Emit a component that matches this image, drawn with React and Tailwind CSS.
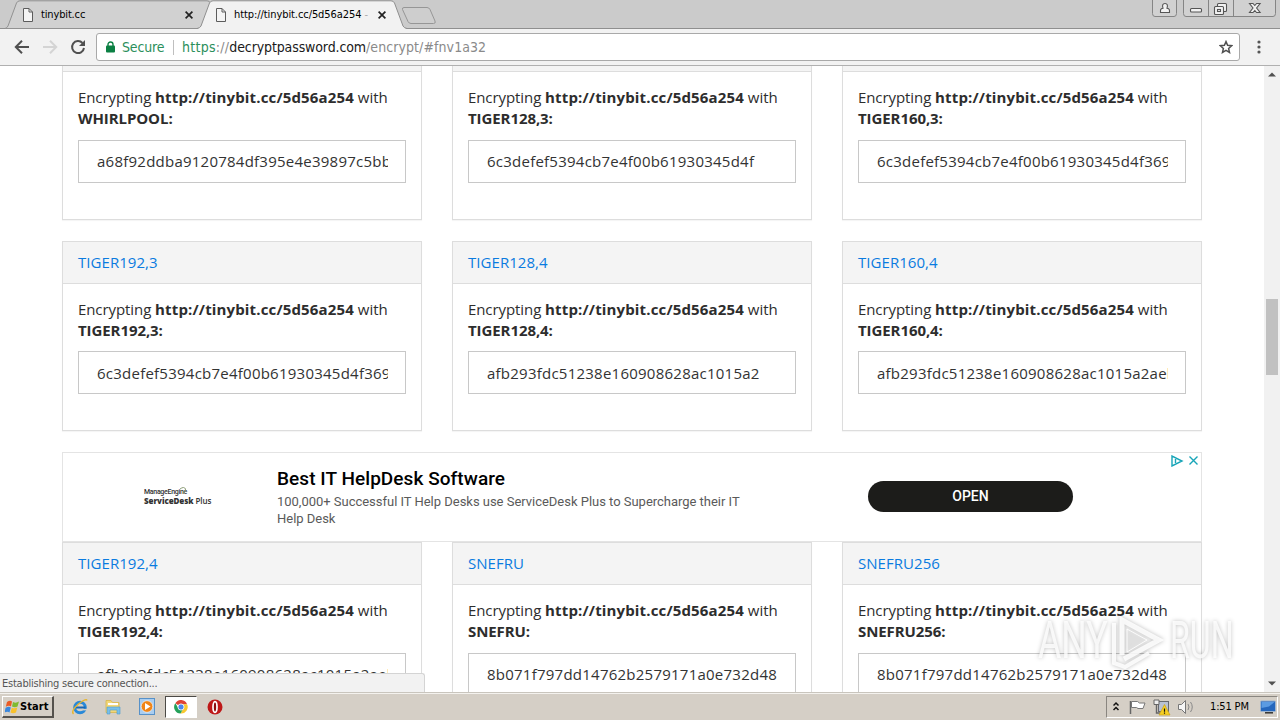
import React from "react";

const rows = [
  {
    id: "r1",
    row: "h-[191px]",
    gap: "mt-[11px] pb-[2px]",
    head: "",
    clipped: true,
    cards: [
      ["WHIRLPOOL", "a68f92ddba9120784df395e4e39897c5bb"],
      ["TIGER128,3", "6c3defef5394cb7e4f00b61930345d4f"],
      ["TIGER160,3", "6c3defef5394cb7e4f00b61930345d4f369"],
    ],
  },
  {
    id: "r2",
    row: "mt-[21px] h-[190px]",
    gap: "mt-[10px]",
    head: "",
    cards: [
      ["TIGER192,3", "6c3defef5394cb7e4f00b61930345d4f369"],
      ["TIGER128,4", "afb293fdc51238e160908628ac1015a2"],
      ["TIGER160,4", "afb293fdc51238e160908628ac1015a2aeb"],
    ],
  },
  {
    id: "r3",
    row: "h-[190px]",
    gap: "mt-[11px] pb-[2px]",
    head: "",
    cards: [
      ["TIGER192,4", "afb293fdc51238e160908628ac1015a2aeb"],
      ["SNEFRU", "8b071f797dd14762b2579171a0e732d48"],
      ["SNEFRU256", "8b071f797dd14762b2579171a0e732d48"],
    ],
  },
];

function Card({ name, hash, gap, clipped }) {
  return (
    <div className="w-[360px] shrink-0 border border-[#dddddd] bg-white shadow-[0_1px_1px_rgba(0,0,0,0.04)]">
      <div className="flex h-[42px] items-center border-b border-[#dddddd] bg-[#f4f4f4] px-[15px] text-[15px] tracking-[0.05px] text-[#0a7be0]">
        {clipped ? null : name}
      </div>
      <div className="px-[15px] pt-[15px]">
        <p className="whitespace-nowrap text-[15px] leading-[21px] text-[#2d2d2d]">
          <span className="tracking-[-0.08px]">Encrypting </span>
          <b className="font-bold tracking-[0.15px]">http://tinybit.cc/5d56a254</b> with
          <br />
          <b className="font-bold tracking-[-0.08px]">{name}:</b>
        </p>
        <div className={`${gap} flex h-[43px] items-center border border-[#c8c8c8] pl-[18px] pr-[17px]`}>
          <span className="flex-1 overflow-hidden whitespace-nowrap text-[15px] leading-[24px] tracking-[0.24px] text-[#333333]">{hash}</span>
        </div>
      </div>
    </div>
  );
}

function Row({ data }) {
  return (
    <div className={`flex gap-[30px] ${data.row}`}>
      {data.cards.map(([name, hash]) => (
        <Card key={name} name={name} hash={hash} gap={data.gap} clipped={data.clipped} />
      ))}
    </div>
  );
}

function PageIcon() {
  return (
    <svg className="block shrink-0" width="10" height="14" viewBox="0 0 10 14" fill="#f4f4f4" stroke="#5c5c5c">
      <path d="M.5.5h5.500l3.500 3.500v9.500h-9z" />
      <path d="M6 .5v3.500h3.500" fill="none" />
    </svg>
  );
}

function CloseX() {
  return (
    <svg className="block shrink-0" width="8" height="8" viewBox="0 0 8 8" stroke="#222" strokeWidth="1.700">
      <path d="M.6.6l6.800 6.800M7.400.6L.6 7.400" />
    </svg>
  );
}

function TabStrip() {
  return (
    <div className="relative flex h-[29px] bg-[#cbcbcb] text-[11px] text-black">
      <svg className="absolute left-0 top-0" width="1280" height="29" viewBox="0 0 1280 29">
        <path d="M0 28.500H1280" stroke="#8f8f8f" />
        <path d="M5 28.500Q7 28 8 26L16.500 3Q17.500.8 20 .8H207Q209.500.8 210.500 3L219 26Q220 28 222 28.500z" fill="#d1d1d1" stroke="#929292" />
        <path d="M197 29Q200 28 201 26L209.500 3Q210.500.8 213 .8H391Q393.500.8 394.500 3L403 26Q404 28 407 29z" fill="#f2f2f2" />
        <path d="M197 28.500Q200 28 201 26L209.500 3Q210.500.8 213 .8H391Q393.500.8 394.500 3L403 26Q404 28 407 28.500" fill="none" stroke="#8f8f8f" />
        <path d="M404 7.500H427Q429 7.500 430 9.500L435 21Q436 23.500 433.500 23.500H411Q409 23.500 408 21.500L402.500 9.500Q402 7.500 404 7.500z" fill="#cecece" stroke="#969696" />
        <g fill="#d1d1d1" stroke="#858585">
          <path d="M1152.500-1V13.500Q1152.500 16.500 1155 16.500H1174Q1176.500 16.500 1176.500 13.500V-1z" />
          <path d="M1183.500-1V13.500Q1183.500 16.500 1186 16.500H1273Q1275.500 16.500 1275.500 13.500V-1z" />
          <path d="M1208.500 0V16M1233.500 0V16" />
        </g>
        <g fill="#f2f2f2" stroke="#555" strokeWidth="1.100">
          <path d="M1160.500 12.500V10.500Q1160.500 8.500 1163 8.200Q1161.500 3.500 1165 3.500Q1168.500 3.500 1167 8.200Q1169.500 8.500 1169.500 10.500V12.500z" />
          <rect x="1190.500" y="8.500" width="11" height="3.500" rx="1" />
          <rect x="1217.500" y="3.500" width="9" height="8" rx="1" />
          <rect x="1214.500" y="6.500" width="9" height="8" rx="1" />
          <rect x="1217.500" y="9.500" width="3" height="2" />
          <path d="M1249.500 3.500h3.500l1.800 2 1.800-2h3.500l-3.500 4.500 3.500 4.500h-3.500l-1.800-2-1.800 2h-3.500l3.500-4.500z" />
        </g>
      </svg>
      <div className="relative flex w-[193px] items-center pl-[23px] font-['DejaVu_Sans_Condensed','DejaVu_Sans',sans-serif]">
        <PageIcon />
        <span className="ml-2 flex-1 leading-[18px] tracking-[-0.15px]">tinybit.cc</span>
        <CloseX />
      </div>
      <div className="relative ml-[23px] flex w-[171px] items-center font-['DejaVu_Sans_Condensed','DejaVu_Sans',sans-serif]">
        <PageIcon />
        <span className="ml-2 w-[137px] whitespace-nowrap leading-[18px] tracking-[-0.08px]">
          http://tinybit.cc/5d56a254 <span className="text-[#aaa]">-</span>
        </span>
        <span className="ml-[7px]"><CloseX /></span>
      </div>
    </div>
  );
}

function Toolbar() {
  return (
    <div className="flex h-[37px] items-center border-b border-[#b0b0b0] bg-[#f2f2f2] pl-[14px]">
      <svg className="block shrink-0" width="74" height="18" viewBox="0 0 74 18" fill="none" strokeWidth="2">
        <path d="M15 9H2M8 2.800L1.800 9L8 15.200" stroke="#505050" />
        <path d="M29 9h13M36 2.800L42.200 9L36 15.200" stroke="#d4d4d4" />
        <path d="M68.500 5A6 6 0 1 0 70 10" stroke="#505050" />
        <path d="M71 2v6h-6z" fill="#505050" />
      </svg>
      <div className="ml-2 flex h-[28px] w-[1144px] items-center rounded-[3px] border border-[#a9a9a9] bg-white pl-[9px] font-['DejaVu_Sans_Condensed','DejaVu_Sans',sans-serif] text-[14px]">
        <svg className="block" width="9" height="12" viewBox="0 0 9 12">
          <path d="M2 6V3.500a2.500 2.500 0 0 1 5 0V6" fill="none" stroke="#0b8043" strokeWidth="1.400" />
          <rect y="4.500" width="9" height="7" rx="1" fill="#0b8043" />
        </svg>
        <span className="ml-[7px] w-[44px] whitespace-nowrap tracking-[-0.15px] text-[#2b8f5b]">Secure</span>
        <span className="ml-[7px] h-[15px] w-px bg-[#bfbfbf]" />
        <span className="ml-[8px] flex-1 whitespace-nowrap text-[#8a8a8a]">
          <span className="tracking-[0.27px]"><span className="text-[#2b8f5b]">https</span>://</span>
          <span className="tracking-[-0.12px] text-[#1a1a1a]">decryptpassword.com</span>
          <span className="tracking-[0.08px]">/encrypt/#fnv1a32</span>
        </span>
        <svg className="mr-[6px] block" width="14" height="14" viewBox="0 0 14 14" fill="none" stroke="#505050" strokeWidth="1.500">
          <path d="M7 1.600l1.600 3.700 4 .4-3 2.700.9 4L7 10.300 3.500 12.400l.9-4-3-2.700 4-.4z" />
        </svg>
      </div>
      <svg className="ml-[17px] block" width="4" height="14" viewBox="0 0 4 14" fill="#555">
        <circle cx="2" cy="2" r="1.600" /><circle cx="2" cy="7" r="1.600" /><circle cx="2" cy="12" r="1.600" />
      </svg>
    </div>
  );
}

function Ad() {
  return (
    <div className="mt-[21px] flex h-[90px] w-[1140px] border border-[#e4e4e4] bg-white font-[Roboto,sans-serif]">
      <div className="relative ml-[81px] mt-[34px] w-[133px] text-[#333]">
        <div className="text-[7px] font-medium leading-[10px] tracking-[-0.3px]">ManageEngine</div>
        <div className="whitespace-nowrap font-['Open_Sans',sans-serif] text-[8px] font-semibold leading-[8px] tracking-[-0.08px]"><b>ServiceDesk</b> Plus</div>
        <svg className="absolute left-[35px] top-0" width="8" height="8" viewBox="0 0 8 8" fill="none">
          <path d="M1 2Q5-1 6.500 2Q7 5 4 6.500" stroke="#8a9b75" />
        </svg>
      </div>
      <div className="w-[480px] pt-[13px]">
        <div className="text-[19px] font-medium leading-[25px] tracking-[0.06px] text-black">Best IT HelpDesk Software</div>
        <div className="mt-[2px] whitespace-nowrap text-[13px] leading-[17px] tracking-[-0.02px] text-[#5a5a5a]">
          100,000+ Successful IT Help Desks use ServiceDesk Plus to Supercharge their IT<br />Help Desk
        </div>
      </div>
      <div className="ml-[111px] mt-[28px] flex h-[31px] w-[205px] items-center justify-center rounded-full bg-[#1c1c1a] text-[14px] font-medium text-white">OPEN</div>
      <svg className="ml-[98px] mt-[2px] block" width="29" height="12" viewBox="0 0 29 12" fill="none" stroke="#18a5b8" strokeWidth="1.400">
        <path d="M1 1v10l10-5zM4.500 4v4" />
        <path d="M18.500 1.500l8 8M26.500 1.500l-8 8" />
      </svg>
    </div>
  );
}

function Watermark() {
  return (
    <div className="absolute left-[1038px] top-[545px] flex h-[60px] items-center font-[Roboto,sans-serif] text-[51px] leading-[60px] text-white/80 [filter:drop-shadow(0_0_2px_rgba(0,0,0,0.3))]">
      <span className="w-[72px]"><span className="inline-block origin-left scale-x-[0.7]">ANY</span></span>
      <svg className="block shrink-0" width="56" height="60" viewBox="0 0 56 60" fill="none" stroke="white" strokeOpacity=".85">
        <path d="M12 44V9L49 29L14 48" strokeWidth="5" />
        <path d="M17 18v23l20-12z" fill="#e6e6e6" fillOpacity=".5" strokeWidth="1" />
        <path d="M4 12v40l11 4 24-14" strokeWidth="4" />
      </svg>
      <span className="w-[66px]"><span className="ml-1 inline-block origin-left scale-x-[0.63]">RUN</span></span>
    </div>
  );
}

function Taskbar() {
  return (
    <div className="flex h-[28px] items-center border-t border-[#c9c5bd] bg-[#d5cfc6] font-['DejaVu_Sans_Condensed','DejaVu_Sans',sans-serif] shadow-[inset_0_1px_0_#f4f2ee]">
      <div className="ml-[2px] mt-px flex h-[22px] w-[52px] items-center border-b-2 border-l border-r-2 border-t border-b-[#55524d] border-l-white border-r-[#55524d] border-t-white pl-[2px]">
        <svg className="block shrink-0" width="15" height="14" viewBox="0 0 15 14">
          <path d="M2 2Q5 0 7 1.500L6 6.500Q4 5 .8 6.800z" fill="#ea5b25" />
          <path d="M8 2Q11 3.500 14 1.500L12.500 6.500Q10 8 7 6.500z" fill="#7fba2f" />
          <path d="M.6 7.800Q4 6 5.800 7.500L4.500 12.500Q2.500 11-.5 12.500z" fill="#3a87dd" />
          <path d="M6.800 7.800Q9.500 9 12.300 7.500L11 12.500Q8 14 5.500 12.500z" fill="#f8c12c" />
        </svg>
        <b className="mt-px text-[11px] leading-[18px] tracking-[0.1px] text-black">Start</b>
      </div>
      <svg className="ml-[17px] block shrink-0" width="18" height="20" viewBox="0 0 18 20">
        <ellipse cx="9" cy="10.500" rx="5.300" ry="5.300" fill="none" stroke="#2989d8" strokeWidth="3" />
        <path d="M5 10.500h9.500" stroke="#1767b5" strokeWidth="2" />
        <path d="M11 11.900h6v1.500h-6z" fill="#d5cfc6" />
        <path d="M2.500 17Q-.5 14 7.500 7Q15 1 16 3.500" fill="none" stroke="#e8b52e" strokeWidth="1.400" />
      </svg>
      <svg className="ml-[16px] block shrink-0" width="17" height="18" viewBox="0 0 17 18">
        <path d="M1 2.500h5l1.500 2H14v10H1z" fill="#f2d778" stroke="#d8b64c" strokeWidth=".8" />
        <path d="M3 5h10v2H3z" fill="#fff" />
        <path d="M2 9h13v7h-3v-4H5v4H2z" fill="#79bfe8" stroke="#4b9bcc" strokeWidth=".6" />
      </svg>
      <svg className="ml-[17px] block shrink-0" width="16" height="17" viewBox="0 0 16 17">
        <rect x=".5" y=".5" width="15" height="16" fill="#a9cdf0" stroke="#5791c8" />
        <circle cx="8" cy="8.500" r="5.800" fill="#f08518" stroke="#fff" strokeWidth=".6" />
        <path d="M6 5l5.500 3.500L6 12z" fill="#fff" />
      </svg>
      <div className="ml-[10px] flex h-[22px] w-[32px] items-center justify-center border border-b-white border-l-[#4c4a46] border-r-white border-t-[#4c4a46] bg-white">
        <svg className="mr-px block" width="14" height="14" viewBox="0 0 15 15">
          <path d="M7.500 7.500L1.400 3.500A7 7 0 0 1 14 4.500H7.500z" fill="#df4335" />
          <path d="M7.500 7.500V4.500H14A7 7 0 0 1 7 14.500L10 9z" fill="#f8c830" />
          <path d="M1.400 3.500A7 7 0 0 0 7 14.500L10 9L5 9z" fill="#24a15a" />
          <circle cx="7.500" cy="7.500" r="3.300" fill="#4a87ee" stroke="#fff" strokeWidth=".9" />
        </svg>
      </div>
      <svg className="ml-[10px] block shrink-0" width="16" height="16" viewBox="0 0 16 16">
        <circle cx="8" cy="8" r="7.500" fill="#be1717" />
        <ellipse cx="8" cy="8" rx="2" ry="5.300" fill="#8e0d0d" stroke="#fff" strokeWidth="1.700" />
      </svg>
      <div className="ml-auto mr-[2px] mt-px flex h-[22px] w-[172px] items-center border border-b-white border-l-[#8a8680] border-r-white border-t-[#8a8680] pl-[6px]">
        <svg className="block shrink-0" width="84" height="18" viewBox="0 0 84 18" fill="none">
          <path d="M.5 7.500L3 5l2.500 2.500M.5 12L3 9.500 5.500 12" stroke="#111" strokeWidth="1.500" />
          <path d="M17.500 16V3" stroke="#666" strokeWidth="1.500" />
          <path d="M18.500 3.500h6l2 1.500h5.500l-2 5.500h-5l-1.500-1h-5z" fill="#fff" stroke="#777" />
          <rect x="45.500" y="3.500" width="10" height="10" fill="#b8c1d2" stroke="#66696f" />
          <path d="M41 2h5v4.500h-5z" fill="#eee" stroke="#666" />
          <path d="M43.500 7v8h4" stroke="#666" strokeWidth="1.400" />
          <path d="M51.500 6.500l5.500 10.500h-11z" fill="#f6cf22" stroke="#c8a118" strokeWidth=".7" />
          <path d="M51.500 10.500v3.200M51.500 14.500v1.200" stroke="#111" strokeWidth="1.200" />
          <path d="M65.500 6.500h3l4-4v13l-4-4h-3z" fill="#f6f6f6" stroke="#777" />
          <path d="M75 6Q77 9 75 12M77.500 4Q81 9 77.500 14" stroke="#888" />
        </svg>
        <span className="ml-[13px] w-[42px] whitespace-nowrap text-[11px] leading-[18px] tracking-[-0.15px] text-black">1:51 PM</span>
        <svg className="ml-[8px] block shrink-0" width="16" height="14" viewBox="0 0 16 14">
          <rect x=".5" y="1" width="15" height="10.500" rx="1" fill="#2567bd" stroke="#9db4cf" />
          <path d="M1.500 2h13L9 6.500 1.500 8z" fill="#5b9be2" />
          <path d="M5 12.800h8" stroke="#333" strokeWidth="1.500" />
        </svg>
      </div>
    </div>
  );
}

export default function App() {
  return (
    <div className="flex h-[720px] w-[1280px] flex-col overflow-hidden bg-white">
      <TabStrip />
      <Toolbar />
      <div className="relative flex h-[626px] overflow-hidden">
        <main className="w-[1264px] shrink-0 pl-[62px] font-['Open_Sans',sans-serif]">
          <div className="-mt-[37px]">
            <Row data={rows[0]} />
            <Row data={rows[1]} />
            <Ad />
            <Row data={rows[2]} />
          </div>
        </main>
        <div className="flex w-4 shrink-0 flex-col items-center justify-between bg-[#f1f1f1]">
          <svg className="mt-[6px] block" width="8" height="5" viewBox="0 0 8 5"><path d="M0 4.500L4 .5l4 4z" fill="#505050" /></svg>
          <div className="mt-[-84px] h-[76px] w-[12px] bg-[#c1c1c1]" />
          <svg className="mb-[6px] block" width="8" height="5" viewBox="0 0 8 5"><path d="M0 .5L4 4.500l4-4z" fill="#505050" /></svg>
        </div>
        <div className="absolute bottom-0 left-0 flex h-[19px] w-[425px] items-center rounded-tr-[3px] border-r border-t border-[#d4d4d4] bg-[#f2f2f2] pl-[2px] pt-[2px] font-['DejaVu_Sans_Condensed','DejaVu_Sans',sans-serif] text-[11px] leading-[16px] tracking-[-0.23px] text-[#555]">
          Establishing secure connection...
        </div>
        <Watermark />
      </div>
      <Taskbar />
    </div>
  );
}
